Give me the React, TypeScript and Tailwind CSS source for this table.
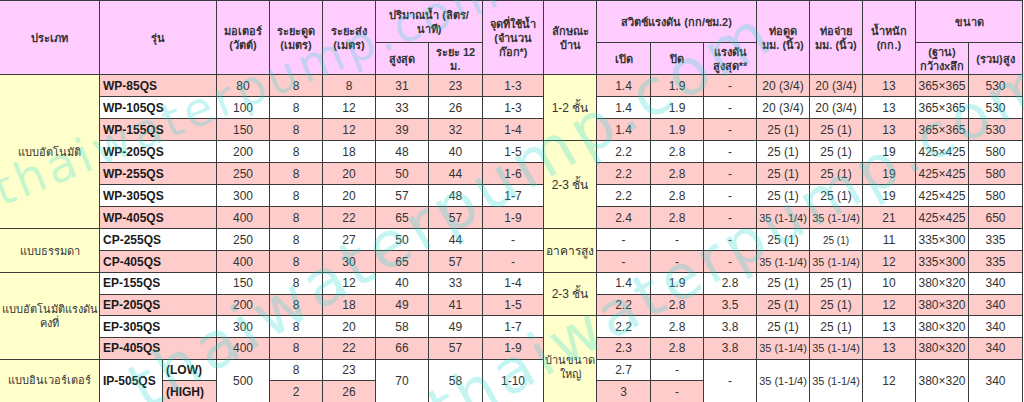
import type { ReactNode } from "react";

const PINK = "bg-[#ffcccc]";
const WHITE = "bg-white";
const YELLOW = "bg-[#ffffcc]";
const HEAD = "bg-[#ffccff]";

type Row = {
  model: string;
  v: string[];
  pink: boolean;
};

// motor, suction, head, max, at12, points | open, close, maxP, inPipe, outPipe, weight, base, height
const rows: Row[] = [
  { model: "WP-85QS", pink: true, v: ["80", "8", "8", "31", "23", "1-3", "1.4", "1.9", "-", "20 (3/4)", "20 (3/4)", "13", "365×365", "530"] },
  { model: "WP-105QS", pink: false, v: ["100", "8", "12", "33", "26", "1-3", "1.4", "1.9", "-", "20 (3/4)", "20 (3/4)", "13", "365×365", "530"] },
  { model: "WP-155QS", pink: true, v: ["150", "8", "12", "39", "32", "1-4", "1.4", "1.9", "-", "25 (1)", "25 (1)", "13", "365×365", "530"] },
  { model: "WP-205QS", pink: false, v: ["200", "8", "18", "48", "40", "1-5", "2.2", "2.8", "-", "25 (1)", "25 (1)", "19", "425×425", "580"] },
  { model: "WP-255QS", pink: true, v: ["250", "8", "20", "50", "44", "1-6", "2.2", "2.8", "-", "25 (1)", "25 (1)", "19", "425×425", "580"] },
  { model: "WP-305QS", pink: false, v: ["300", "8", "20", "57", "48", "1-7", "2.2", "2.8", "-", "25 (1)", "25 (1)", "19", "425×425", "580"] },
  { model: "WP-405QS", pink: true, v: ["400", "8", "22", "65", "57", "1-9", "2.4", "2.8", "-", "35 (1-1/4)", "35 (1-1/4)", "21", "425×425", "650"] },
  { model: "CP-255QS", pink: false, v: ["250", "8", "27", "50", "44", "-", "-", "-", "-", "25 (1)", "25 (1)*", "11", "335×300", "335"] },
  { model: "CP-405QS", pink: true, v: ["400", "8", "30", "65", "57", "-", "-", "-", "-", "35 (1-1/4)", "35 (1-1/4)", "12", "335×300", "335"] },
  { model: "EP-155QS", pink: false, v: ["150", "8", "12", "40", "33", "1-4", "1.4", "1.9", "2.8", "25 (1)", "25 (1)", "10", "380×320", "340"] },
  { model: "EP-205QS", pink: true, v: ["200", "8", "18", "49", "41", "1-5", "2.2", "2.8", "3.5", "25 (1)", "25 (1)", "12", "380×320", "340"] },
  { model: "EP-305QS", pink: false, v: ["300", "8", "20", "58", "49", "1-7", "2.2", "2.8", "3.8", "25 (1)", "25 (1)", "13", "380×320", "340"] },
  { model: "EP-405QS", pink: true, v: ["400", "8", "22", "66", "57", "1-9", "2.3", "2.8", "3.8", "35 (1-1/4)", "35 (1-1/4)", "13", "380×320", "340"] },
];

const cats: Record<number, [ReactNode, number]> = {
  0: ["แบบอัตโนมัติ", 7],
  7: ["แบบธรรมดา", 2],
  9: [<>แบบอัตโนมัติแรงดัน<br />คงที่</>, 4],
};

const houses: Record<number, [ReactNode, number]> = {
  0: ["1-2 ชั้น", 3],
  3: ["2-3 ชั้น", 4],
  7: ["อาคารสูง", 2],
  9: ["2-3 ชั้น", 2],
  11: [<span className="relative top-[8px] text-[11px] leading-[14px] block">บ้านขนาด<br />ใหญ่</span>, 4],
};

const B = "border border-[#3a3a3a] p-0 text-center align-middle";

function Td({ children, className = "", rowSpan, colSpan }: { children?: ReactNode; className?: string; rowSpan?: number; colSpan?: number }) {
  return (
    <td rowSpan={rowSpan} colSpan={colSpan} className={`${B} ${className}`}>
      {children}
    </td>
  );
}

function Th({ children, className = "", rowSpan, colSpan }: { children?: ReactNode; className?: string; rowSpan?: number; colSpan?: number }) {
  return (
    <th rowSpan={rowSpan} colSpan={colSpan} className={`${B} ${HEAD} font-bold text-[11px] leading-[14px] text-[#333] ${className}`}>
      {children}
    </th>
  );
}

function val(s: string) {
  if (s.startsWith("35 (")) return <span className="text-[11px]">{s}</span>;
  if (s === "25 (1)*") return <span className="text-[10px]">25 (1)</span>;
  return s;
}

export default function App() {
  const cols = [100, 63, 54, 53, 53, 53, 53, 54, 61, 53, 54, 53, 53, 53, 53, 53, 53, 54];
  return (
    <div
      className="relative w-[1024px] h-[402px] overflow-hidden bg-white text-[#333]"
      style={{ fontFamily: "'Liberation Sans', 'DejaVu Sans', sans-serif" }}
    >
      <table className="table-fixed border-collapse w-[1023px] -ml-px text-[12px] leading-none">
        <colgroup>
          {cols.map((w, i) => (
            <col key={i} style={{ width: w }} />
          ))}
        </colgroup>
        <thead>
          <tr className="h-[42px]">
            <Th rowSpan={2}>ประเภท</Th>
            <Th rowSpan={2} colSpan={2}>รุ่น</Th>
            <Th rowSpan={2}>มอเตอร์<br />(วัตต์)</Th>
            <Th rowSpan={2}>ระยะดูด<br />(เมตร)</Th>
            <Th rowSpan={2}>ระยะส่ง<br />(เมตร)</Th>
            <Th colSpan={2}>ปริมาณน้ำ (ลิตร/<br />นาที)</Th>
            <Th rowSpan={2}>จุดที่ใช้น้ำ<br />(จำนวน<br />ก๊อก*)</Th>
            <Th rowSpan={2}>ลักษณะ<br />บ้าน</Th>
            <Th colSpan={3}>สวิตช์แรงดัน (กก/ชม.2)</Th>
            <Th rowSpan={2}>ท่อดูด<br />มม. (นิ้ว)</Th>
            <Th rowSpan={2}>ท่อจ่าย<br />มม. (นิ้ว)</Th>
            <Th rowSpan={2}>น้ำหนัก<br />(กก.)</Th>
            <Th colSpan={2}>ขนาด</Th>
          </tr>
          <tr className="h-[32px]">
            <Th>สูงสุด</Th>
            <Th>ระยะ 12<br />ม.</Th>
            <Th>เปิด</Th>
            <Th>ปิด</Th>
            <Th>แรงดัน<br />สูงสุด**</Th>
            <Th>(ฐาน)<br />กว้างxลึก</Th>
            <Th>(รวม)สูง</Th>
          </tr>
        </thead>
        <tbody>
          {rows.map((r, i) => {
            const bg = r.pink ? PINK : WHITE;
            const cat = cats[i];
            const house = houses[i];
            return (
              <tr key={r.model} className={i < 9 ? "h-[22px]" : "h-[21.7px]"}>
                {cat && (
                  <Td rowSpan={cat[1]} className={`${YELLOW} text-[11px] leading-[14px]`}>
                    {cat[0]}
                  </Td>
                )}
                <Td colSpan={2} className={`${bg} text-left pl-[3px] font-bold text-[#1a1a1a]`}>
                  {r.model}
                </Td>
                {r.v.slice(0, 6).map((s, j) => (
                  <Td key={j} className={bg}>{val(s)}</Td>
                ))}
                {house && (
                  <Td rowSpan={house[1]} className={`${YELLOW} align-middle`}>
                    {house[0]}
                  </Td>
                )}
                {r.v.slice(6).map((s, j) => (
                  <Td key={j + 6} className={bg}>{val(s)}</Td>
                ))}
              </tr>
            );
          })}
          <tr className="h-[21.7px]">
            <Td rowSpan={2} className={`${YELLOW} text-[11px]`}>แบบอินเวอร์เตอร์</Td>
            <Td rowSpan={2} className={`${WHITE} text-left pl-[3px] font-bold text-[#1a1a1a]`}>IP-505QS</Td>
            <Td className={`${WHITE} text-left pl-[3px] font-bold text-[#1a1a1a]`}>(LOW)</Td>
            <Td rowSpan={2} className={WHITE}>500</Td>
            <Td className={WHITE}>8</Td>
            <Td className={WHITE}>23</Td>
            <Td rowSpan={2} className={WHITE}>70</Td>
            <Td rowSpan={2} className={WHITE}>58</Td>
            <Td rowSpan={2} className={WHITE}>1-10</Td>
            <Td className={WHITE}>2.7</Td>
            <Td className={WHITE}>-</Td>
            <Td rowSpan={2} className={WHITE}>-</Td>
            <Td rowSpan={2} className={WHITE}><span className="text-[11px]">35 (1-1/4)</span></Td>
            <Td rowSpan={2} className={WHITE}><span className="text-[11px]">35 (1-1/4)</span></Td>
            <Td rowSpan={2} className={WHITE}>12</Td>
            <Td rowSpan={2} className={WHITE}>380×320</Td>
            <Td rowSpan={2} className={WHITE}>340</Td>
          </tr>
          <tr className="h-[21.7px]">
            <Td className={`${PINK} text-left pl-[3px] font-bold text-[#1a1a1a]`}>(HIGH)</Td>
            <Td className={PINK}>2</Td>
            <Td className={PINK}>26</Td>
            <Td className={PINK}>3</Td>
            <Td className={PINK}>-</Td>
          </tr>
        </tbody>
      </table>

      {/* watermark */}
      <div
        className="pointer-events-none absolute inset-0 text-[#19d9d0]/25"
        style={{ fontFamily: "'DejaVu Sans', sans-serif" }}
      >
        <span className="absolute left-[4px] top-[166px] origin-bottom-left -rotate-[22deg] whitespace-nowrap text-[47px] tracking-[4px] leading-none">
          thaiwaterpump.com
        </span>
        <span className="absolute left-[150px] top-[356px] origin-bottom-left -rotate-[30deg] whitespace-nowrap text-[64px] tracking-[5px] leading-none">
          thaiwaterpump.com
        </span>
        <span className="absolute left-[448px] top-[380px] origin-bottom-left -rotate-[29deg] whitespace-nowrap text-[61px] tracking-[5px] leading-none">
          thaiwaterpump.com
        </span>
      </div>
    </div>
  );
}
